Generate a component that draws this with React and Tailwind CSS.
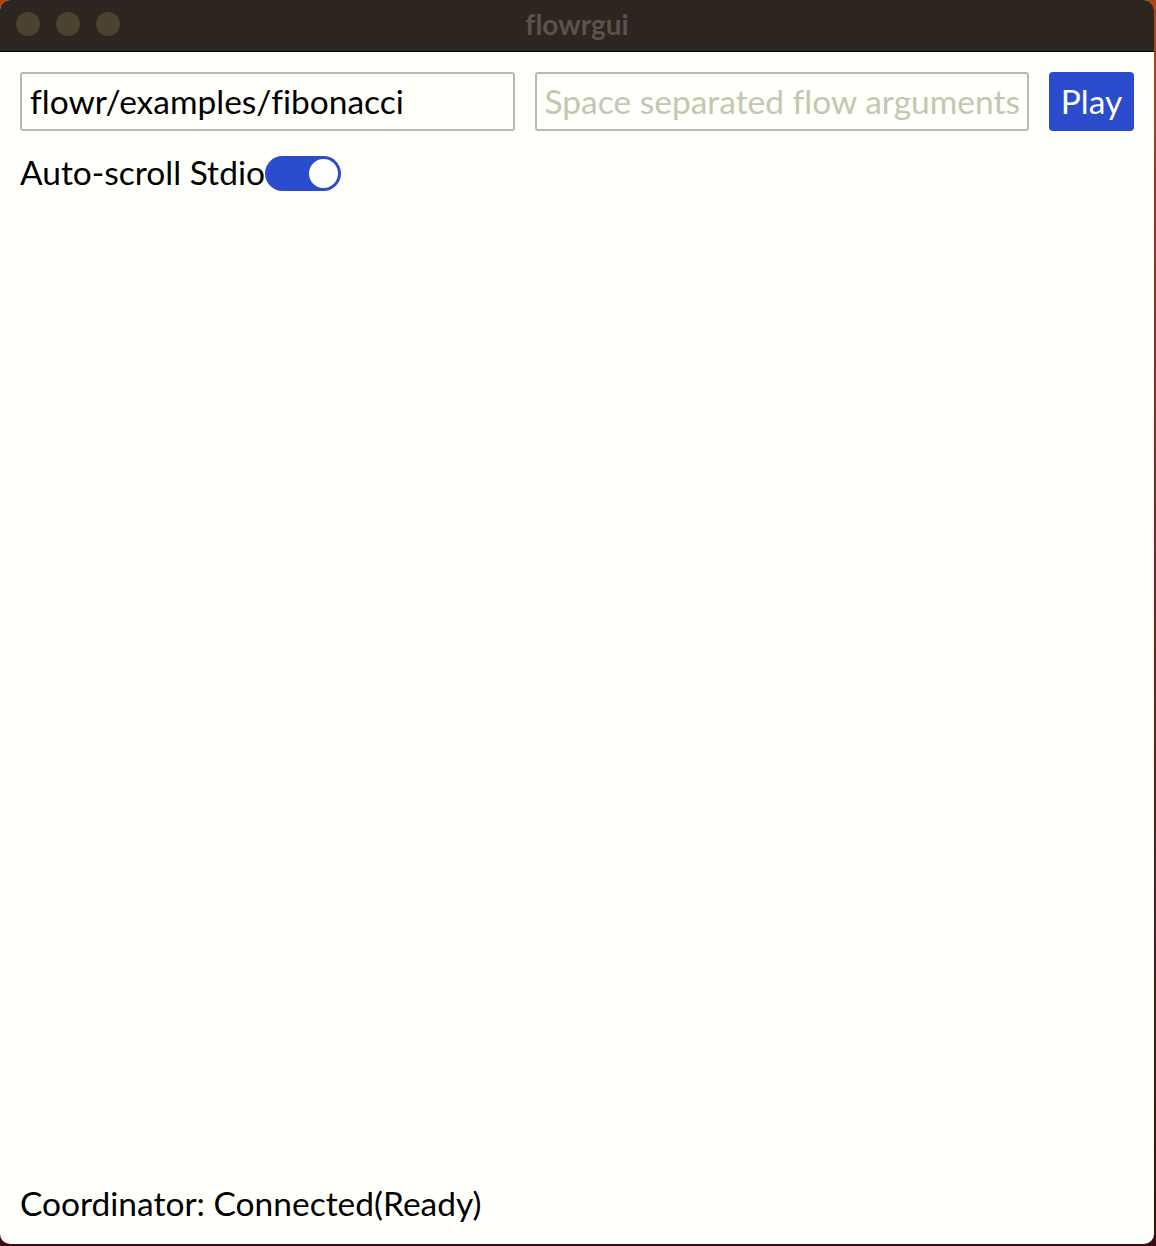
import React, { useState } from 'react';

const Toggle = ({ on, onChange }) => (
  <button
    onClick={() => onChange(!on)}
    className={`w-[76px] h-[35px] rounded-full flex items-center p-[1px] ${on ? 'bg-[#2b4ccc] justify-end' : 'bg-gray-300 justify-start'}`}
  >
    <span className="w-[33px] h-[33px] rounded-full bg-white border-2 border-[#2b4ccc]"></span>
  </button>
);

export default function App() {
  const [autoScroll, setAutoScroll] = useState(true);

  return (
    <div
      className="w-[1156px] h-[1246px] bg-gradient-to-b from-[#b8400e] to-[#3a0b10] overflow-hidden [font-variant-ligatures:none]"
      style={{ fontFamily: 'Lato, "Open Sans", sans-serif' }}
    >
      <div className="w-[1154px] h-[1244px] rounded-[10px] overflow-hidden flex flex-col bg-[#fffffb]">
        {/* Title bar */}
        <div className="h-[52px] shrink-0 bg-[#2d2520] border-b border-black relative flex items-center justify-center">
          <div className="absolute left-[16px] top-[12px] flex gap-[16px]">
            <span className="w-[24px] h-[24px] rounded-full bg-[#4c4232]"></span>
            <span className="w-[24px] h-[24px] rounded-full bg-[#4c4232]"></span>
            <span className="w-[24px] h-[24px] rounded-full bg-[#4c4232]"></span>
          </div>
          <span className="text-[28px] font-bold text-[#5c524a] -mt-[4px]">flowrgui</span>
        </div>

        {/* Content */}
        <div className="flex-1 flex flex-col px-5 pt-5 pb-[20px] text-black text-[33.5px]">
          <div className="flex gap-5 items-stretch h-[59px]">
            <input
              defaultValue="flowr/examples/fibonacci"
              className="flex-1 min-w-0 border-2 border-[#b8b8b8] rounded-[3px] px-[8px] bg-transparent outline-none"
            />
            <input
              placeholder="Space separated flow arguments"
              className="flex-1 min-w-0 border-2 border-[#b8b8b8] rounded-[3px] px-[8px] bg-transparent outline-none placeholder:text-[#c4c7b0]"
            />
            <button className="w-[85px] shrink-0 bg-[#2b4ccc] text-white rounded-[4px]">Play</button>
          </div>

          <div className="flex items-center mt-[22px] h-[40px]">
            <span className="leading-none">Auto-scroll Stdio</span>
            <Toggle on={autoScroll} onChange={setAutoScroll} />
          </div>

          <div className="flex-1"></div>

          <div className="leading-none mb-[4px]">Coordinator: Connected(Ready)</div>
        </div>
      </div>
    </div>
  );
}
